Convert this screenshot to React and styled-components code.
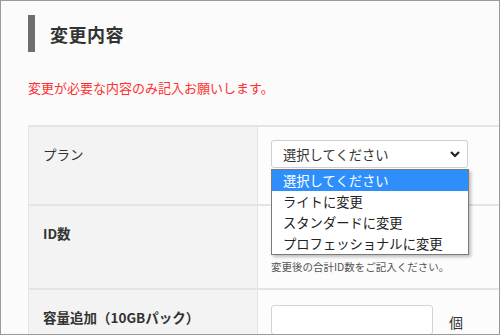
import React from "react";
import styled, { createGlobalStyle } from "styled-components";

const Global = createGlobalStyle`
  html, body { margin: 0; padding: 0; background: #fafbfa; }
  body { font-family: "Noto Sans CJK JP", "Noto Sans", sans-serif; }
  * { box-sizing: border-box; }
`;

const Frame = styled.div`
  width: 500px;
  height: 335px;
  border: 1px solid #9a9a9a;
  background: #fafbfa;
  overflow: hidden;
  padding: 14px 0 0 27px;
`;

const Heading = styled.h2`
  margin: 0;
  height: 37px;
  border-left: 7px solid #6e6f6e;
  padding-left: 15px;
  display: flex;
  align-items: center;
  font-size: 18px;
  font-weight: bold;
  color: #333;
  letter-spacing: 0.5px;
`;

const Notice = styled.p`
  margin: 26px 0 0;
  font-size: 13px;
  line-height: 20px;
  color: #ff3030;
`;

const Table = styled.div`
  margin-top: 27px;
  width: 520px;
  display: grid;
  grid-template-columns: 229px 1fr;
  border-top: 2px solid #e3e4e3;
  border-left: 1px solid #e3e4e3;
`;

const Label = styled.div`
  background: #f2f3f2;
  border-bottom: 2px solid #e3e4e3;
  border-right: 1px solid #e3e4e3;
  height: ${(p) => p.$h}px;
  padding: 13px 0 0 14px;
  font-size: 13.5px;
  line-height: 28px;
  font-weight: ${(p) => (p.$bold ? "bold" : "normal")};
  color: #333;
`;

const Cell = styled.div`
  position: relative;
  z-index: ${(p) => (p.$raised ? 2 : "auto")};
  background: #fbfcfb;
  border-bottom: 2px solid #e3e4e3;
  height: ${(p) => p.$h}px;
  padding: 13px 0 0 13px;
`;

const SelectBox = styled.div`
  position: relative;
  width: 197px;
  height: 28px;
  border: 1px solid #cfcfcf;
  border-radius: 3px;
  background: #fff;
  display: flex;
  align-items: center;
  justify-content: space-between;
  padding: 0 6px 0 11px;
  font-size: 13.3px;
  color: #333;
`;

const Menu = styled.ul`
  position: absolute;
  top: 28px;
  left: -1px;
  width: 198px;
  margin: 0;
  padding: 0;
  list-style: none;
  background: #fff;
  border: 1px solid #7a7a7a;
  box-shadow: 2px 2px 3px rgba(0, 0, 0, 0.25);
  z-index: 5;
`;

const Option = styled.li`
  height: 21px;
  line-height: 21px;
  padding-left: 11px;
  font-size: 13.3px;
  color: ${(p) => (p.$active ? "#fff" : "#222")};
  background: ${(p) => (p.$active ? "#2e8ffc" : "#fff")};
`;

const Input = styled.div`
  width: ${(p) => p.$w}px;
  height: 30px;
  margin-top: ${(p) => p.$mt || 0}px;
  border: 1px solid #d3d3d3;
  border-radius: 3px;
  background: #fff;
`;

const Help = styled.div`
  margin-top: 10px;
  font-size: 10.5px;
  line-height: 16px;
  color: #555;
`;

const InputRow = styled.div`
  display: flex;
  align-items: center;
  gap: 16px;
  font-size: 14px;
  color: #333;
`;

const Unit = styled.span`
  margin-top: 5px;
`;

export default function App() {
  return (
    <>
      <Global />
      <Frame>
        <Heading>変更内容</Heading>
        <Notice>変更が必要な内容のみ記入お願いします。</Notice>
        <Table>
          <Label $h={79}>プラン</Label>
          <Cell $h={79} $raised>
            <SelectBox>
              <span>選択してください</span>
              <svg width="12" height="8" viewBox="0 0 12 8">
                <polyline points="2,2 6,6 10,2" fill="none" stroke="#222" strokeWidth="2.2" />
              </svg>
              <Menu>
                <Option $active>選択してください</Option>
                <Option>ライトに変更</Option>
                <Option>スタンダードに変更</Option>
                <Option>プロフェッショナルに変更</Option>
              </Menu>
            </SelectBox>
          </Cell>
          <Label $h={84} $bold>ID数</Label>
          <Cell $h={84}>
            <Input $w={197} />
            <Help>変更後の合計ID数をご記入ください。</Help>
          </Cell>
          <Label $h={80} $bold>容量追加（10GBパック）</Label>
          <Cell $h={80}>
            <InputRow>
              <Input $w={162} $mt={2} />
              <Unit>個</Unit>
            </InputRow>
          </Cell>
        </Table>
      </Frame>
    </>
  );
}
